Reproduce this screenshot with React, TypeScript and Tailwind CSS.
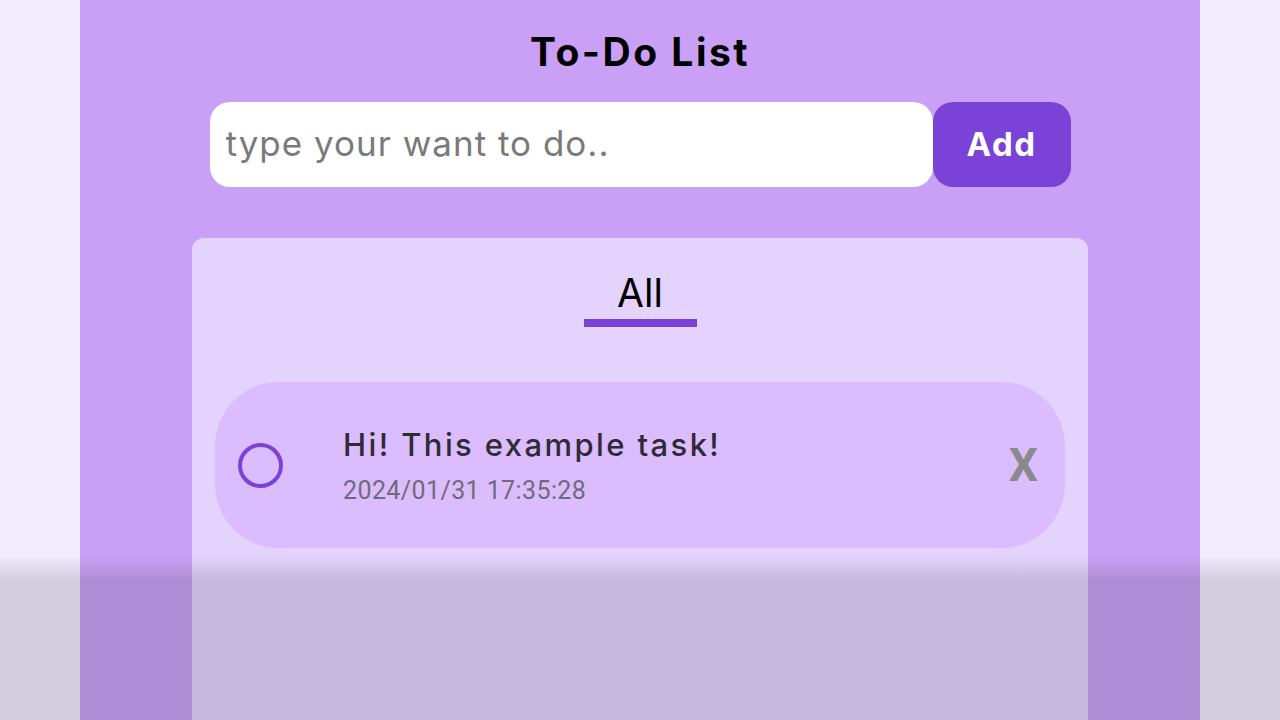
export default function App() {
  return (
    <div className="relative h-screen overflow-hidden bg-[#f2eafd] flex justify-center">
      {/* Main panel */}
      <div className="w-[1120px] bg-[#c9a0f5] flex flex-col items-center pt-[28px]">
        <h1 className="text-[39px] leading-[48px] font-bold text-black tracking-[2.5px] font-['Inter',sans-serif]">
          To-Do List
        </h1>

        {/* Input row */}
        <div className="mt-[26px] flex h-[85px] w-[861px]">
          <input
            type="text"
            placeholder="type your want to do.."
            className="flex-1 h-full rounded-[20px] bg-white px-[16px] pb-[4px] text-[35px] text-[#333] placeholder:text-[#7a7a7a] outline-none font-['Inter',sans-serif] tracking-[1px]"
          />
          <button className="w-[138px] h-full rounded-[20px] bg-[#7b42d7] text-white text-[33px] font-bold font-['Inter',sans-serif] tracking-[1.5px]">
            Add
          </button>
        </div>

        {/* List card */}
        <div className="mt-[51px] w-[896px] flex-1 rounded-t-[12px] bg-[#e3d3fd] px-[23px] pt-[31px]">
          <div className="flex flex-col items-center">
            <span className="text-[39px] leading-[48px] text-black font-['Inter',sans-serif] font-normal">All</span>
            <div className="mt-[2px] h-[8px] w-[113px] bg-[#7b42d7]" />
          </div>

          {/* Task */}
          <div className="mt-[55px] flex h-[166px] items-center rounded-[64px] bg-[#dbbcfe] pl-[23px] pr-[27px]">
            <div className="h-[45px] w-[45px] rounded-full border-[4px] border-[#7b42d7]" />
            <div className="ml-[60px] flex flex-1 flex-col">
              <span className="text-[31px] leading-[38px] text-[#2f2a36] font-['Inter',sans-serif] font-medium tracking-[2.4px]">
                Hi! This example task!
              </span>
              <span className="mt-[14px] text-[25px] leading-[26px] text-[#716a7a] font-['Roboto',sans-serif] tracking-[0.4px]">
                2024/01/31 17:35:28
              </span>
            </div>
            <span className="text-[46px] leading-none font-bold text-[#8a8a8a] font-['Roboto',sans-serif]">X</span>
          </div>
        </div>
      </div>

      {/* Dim overlay at the bottom */}
      <div className="pointer-events-none absolute inset-x-0 top-[555px] bottom-0 flex flex-col">
        <div className="h-[25px] bg-linear-to-b from-black/0 to-black/[0.12]" />
        <div className="flex-1 bg-black/[0.12]" />
      </div>
    </div>
  );
}
